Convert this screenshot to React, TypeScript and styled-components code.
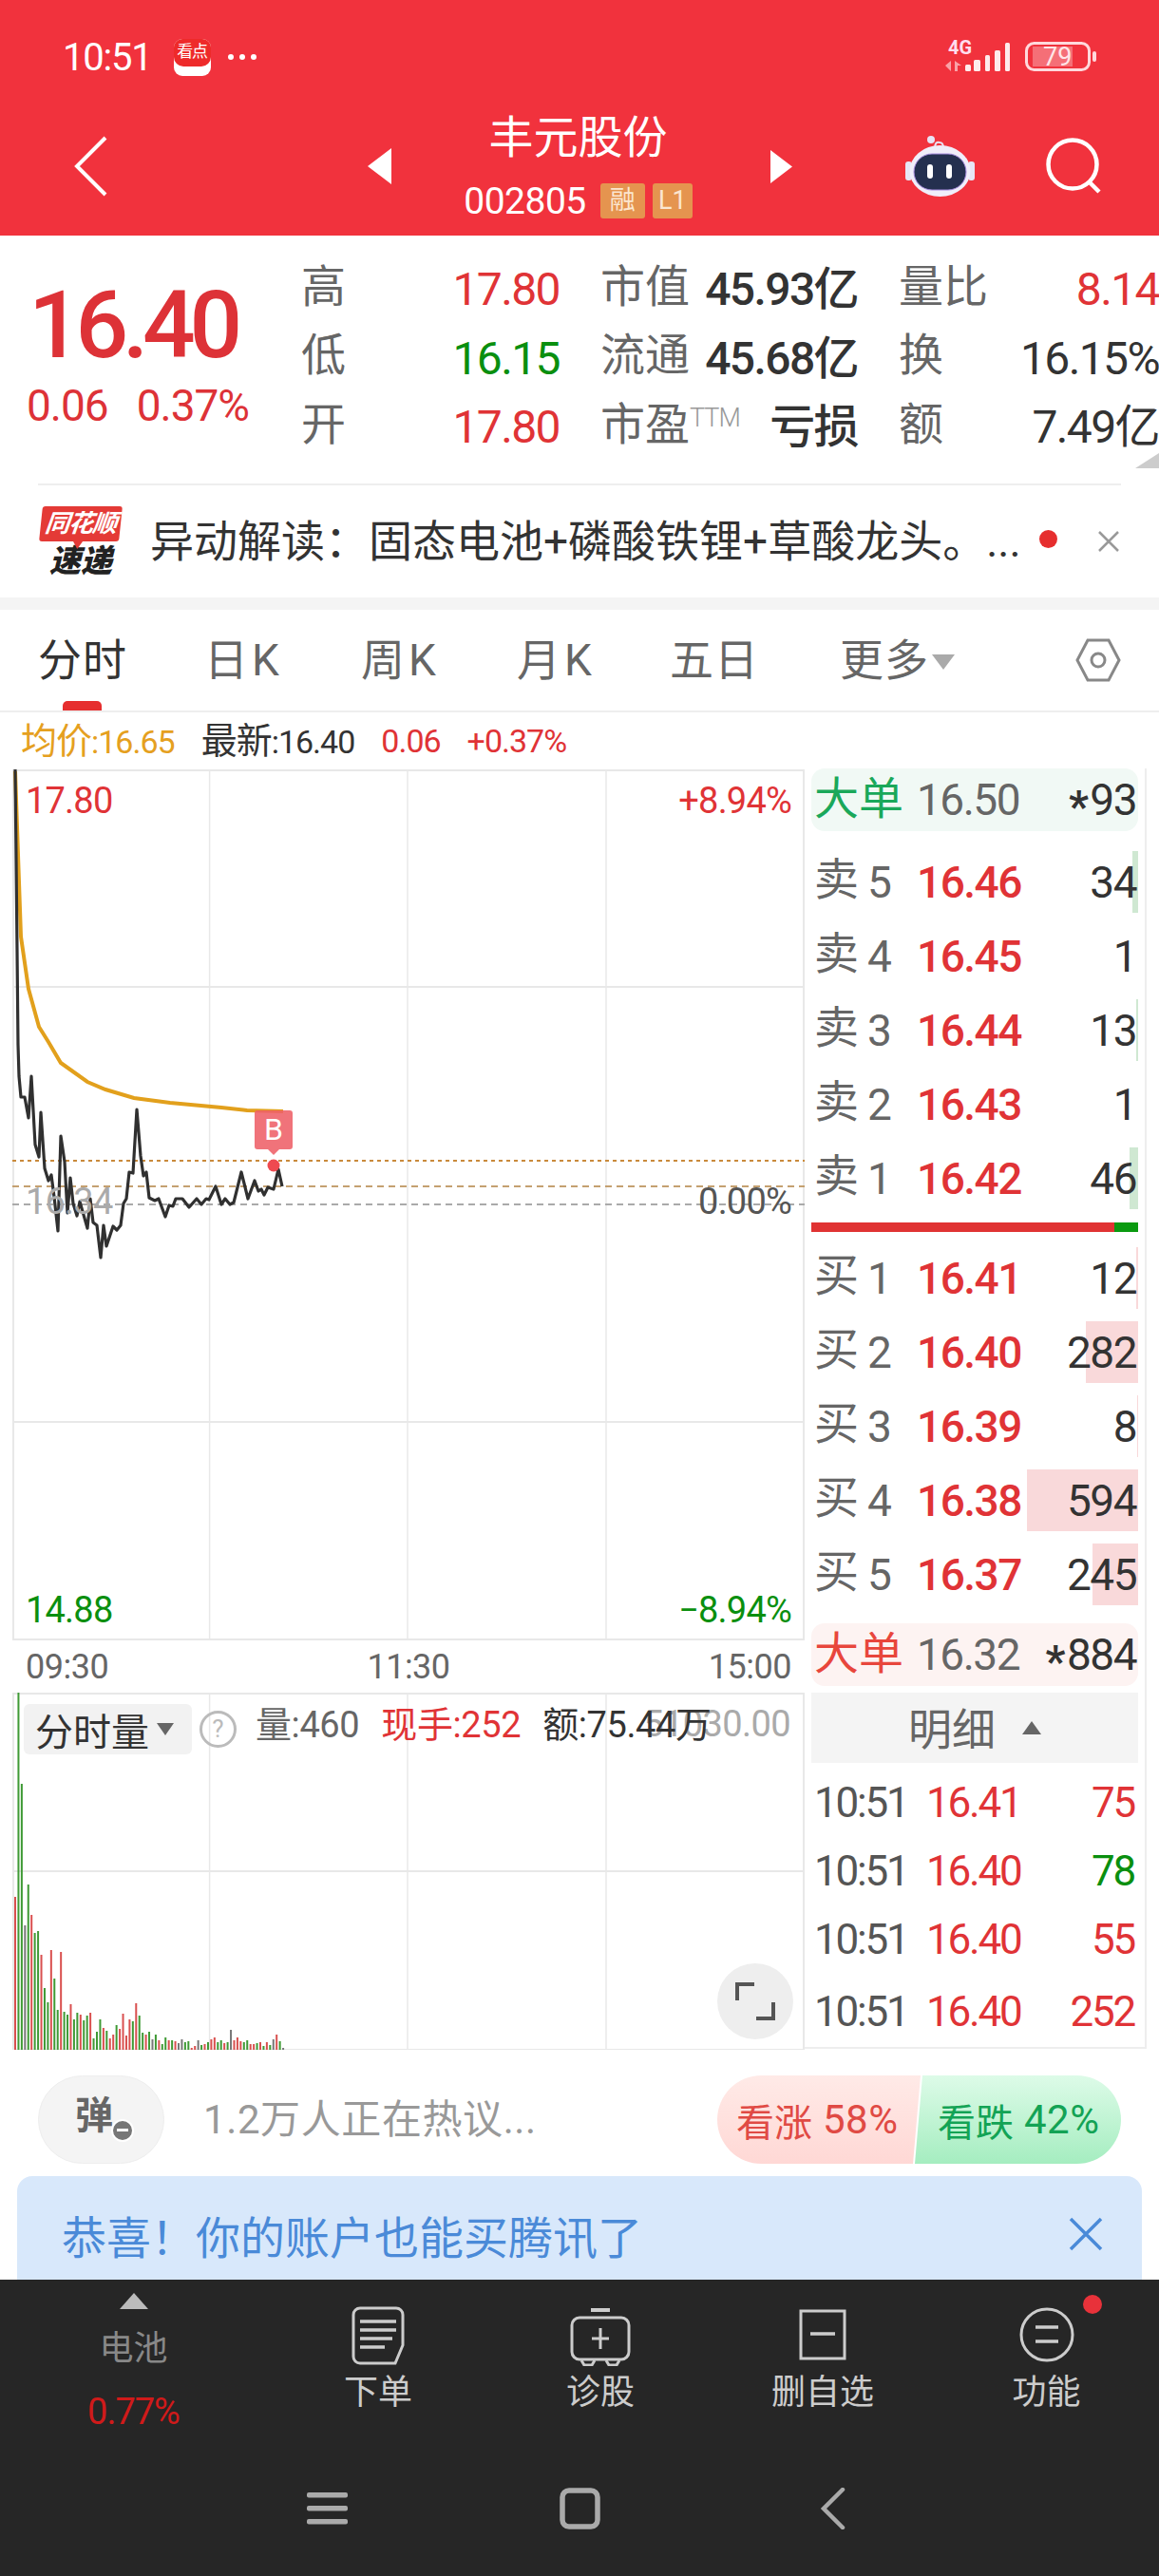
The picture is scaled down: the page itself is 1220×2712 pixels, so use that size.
import styled, { createGlobalStyle } from 'styled-components';

const FONT = `Roboto, 'Noto Sans CJK SC', sans-serif`;
const RED = '#e03336';
const GREEN = '#0a8f0f';

const GlobalStyle = createGlobalStyle`
  html, body { margin: 0; padding: 0; background: #fff; }
  * { box-sizing: border-box; }
`;

const Page = styled.div`
  width: 1220px;
  height: 2712px;
  overflow: hidden;
  display: flex;
  flex-direction: column;
  background: #fff;
  color: #333;
  font-family: ${FONT};
`;

/* ---------- red header ---------- */
const Header = styled.header`
  height: 248px;
  flex: none;
  background: #f1323d;
  color: #fff;
`;
const StatusRow = styled.div`
  height: 120px;
  display: flex;
  align-items: center;
  padding: 0 65px 0 66px;
`;
const Clock = styled.span`
  font-size: 40px;
  letter-spacing: -1.2px;
`;
const AppBadge = styled.span`
  width: 39px;
  height: 39px;
  margin-left: 23px;
  border-radius: 9px;
  overflow: hidden;
  background: #fff;
  display: block;
`;
const AppBadgeTop = styled.span`
  display: block;
  height: 29px;
  background: #ee2a2a;
  border-radius: 0 0 10px 10px;
  font-size: 17px;
  line-height: 27px;
  letter-spacing: -1px;
  text-align: center;
  color: #fff;
`;
const StatusDots = styled.span`
  display: flex;
  gap: 6px;
  margin-left: 18px;
  i {
    width: 6px;
    height: 6px;
    border-radius: 50%;
    background: #fff;
  }
`;
const StatusRight = styled.svg`
  margin-left: auto;
  display: block;
`;
const NavRow = styled.div`
  height: 128px;
  display: flex;
  align-items: center;
  padding: 0 0 18px 78px;
`;
const Titles = styled.div`
  width: 399px;
  padding-right: 6px;
  align-self: flex-start;
  display: flex;
  flex-direction: column;
  align-items: center;
`;
const Title = styled.div`
  margin-top: 2px;
  font-size: 47px;
  line-height: 46px;
`;
const CodeRow = styled.div`
  display: flex;
  align-items: center;
  height: 37px;
  margin-top: 25px;
  font-size: 39px;
  letter-spacing: -0.5px;
`;
const Tag = styled.span<{ $left: number }>`
  margin-left: ${(p) => p.$left}px;
  width: ${(p) => (p.$left > 10 ? 47 : 42)}px;
  height: 37px;
  border-radius: 3px;
  background: #e5944f;
  color: #fbe6d0;
  font-size: 27px;
  letter-spacing: 0;
  line-height: 36px;
  text-align: center;
`;
const NavIcon = styled.svg<{ $left?: number }>`
  display: block;
  flex: none;
  margin-left: ${(p) => p.$left ?? 0}px;
`;

/* ---------- quote block ---------- */
const Quote = styled.section`
  position: relative;
  height: 261px;
  flex: none;
  display: flex;
  padding-top: 21px;
`;
const PriceBox = styled.div`
  width: 317px;
  flex: none;
  padding-left: 30px;
`;
const BigPrice = styled.div`
  font-size: 98px;
  line-height: 96px;
  margin-top: 26px;
  font-weight: 500;
  letter-spacing: -6.2px;
  color: #dd3237;
`;
const PriceSub = styled.div`
  display: flex;
  gap: 30px;
  margin: 12px 0 0 -2px;
  font-size: 46px;
  line-height: 48px;
  letter-spacing: -1px;
  color: #dd3237;
`;
const StatGrid = styled.div`
  display: grid;
  grid-template-columns: 272px 271px 274px;
  column-gap: 43px;
  grid-auto-rows: 72.5px;
  flex: none;
`;
const Stat = styled.div`
  display: flex;
  align-items: center;
  justify-content: space-between;
  white-space: nowrap;
`;
const StatLabel = styled.span`
  margin-bottom: 7px;
  font-size: 47px;
  line-height: 60px;
  color: #666;
`;
const Ttm = styled.sup`
  font-size: 27px;
  font-weight: 300;
  color: #999;
  letter-spacing: -1px;
  vertical-align: 14px;
  line-height: 0;
`;
const StatValue = styled.span<{ $color?: string; $weight?: number }>`
  font-size: 48px;
  line-height: 60px;
  font-weight: ${(p) => p.$weight ?? 400};
  letter-spacing: -1.6px;
  color: ${(p) => p.$color ?? '#333'};
`;
const CornerMark = styled.i`
  position: absolute;
  right: 0;
  bottom: 16px;
  width: 25px;
  height: 16px;
  background: #ccc;
  clip-path: polygon(100% 0, 100% 100%, 0 100%);
`;

/* ---------- notice ---------- */
const Notice = styled.section`
  height: 120px;
  flex: none;
  margin: 0 40px;
  border-top: 2px solid #eee;
  display: flex;
  align-items: center;
  position: relative;
`;
const Brand = styled.div`
  width: 90px;
  flex: none;
  display: flex;
  flex-direction: column;
  align-items: center;
`;
const BrandBubble = styled.div`
  position: relative;
  width: 84px;
  height: 37px;
  background: #e43a36;
  border-radius: 3px;
  transform: skewX(-6deg);
  color: #fff;
  font-size: 26px;
  font-weight: 700;
  font-style: italic;
  line-height: 36px;
  letter-spacing: -1px;
  text-align: center;
  &::after {
    content: '';
    position: absolute;
    left: 36px;
    bottom: -8px;
    border: 5px solid transparent;
    border-top-color: #e43a36;
    border-bottom: 0;
    border-top-width: 8px;
  }
`;
const BrandText = styled.div`
  margin-top: 5px;
  font-size: 33px;
  line-height: 32px;
  font-weight: 900;
  font-style: italic;
  color: #222;
`;
const NoticeText = styled.div`
  margin: 0 0 8px 28px;
  font-size: 46px;
  white-space: nowrap;
  color: #333;
`;
const NoticeDot = styled.i`
  position: absolute;
  left: 1054px;
  top: 47px;
  width: 19px;
  height: 19px;
  border-radius: 50%;
  background: #e62e2e;
`;
const NoticeClose = styled.svg`
  position: absolute;
  right: 1px;
  top: 47px;
`;
const Band = styled.div`
  height: 13px;
  flex: none;
  background: #f4f4f4;
`;

/* ---------- tabs ---------- */
const Tabs = styled.nav`
  height: 108px;
  flex: none;
  display: flex;
  align-items: center;
  padding: 0 40px 0 40px;
  border-bottom: 2px solid #eee;
`;
const Tab = styled.span<{ $width: number; $active?: boolean; $wide?: boolean }>`
  position: relative;
  width: ${(p) => p.$width}px;
  flex: none;
  font-size: 46px;
  line-height: 104px;
  letter-spacing: ${(p) => (p.$wide ? 4 : 1)}px;
  color: ${(p) => (p.$active ? '#333' : '#666')};
  ${(p) =>
    p.$active &&
    `&::after {
      content: '';
      position: absolute;
      left: 26px;
      bottom: -1px;
      width: 41px;
      height: 10px;
      border-radius: 5px 5px 0 0;
      background: #e62e2e;
    }`}
`;
const TabArrow = styled.i`
  display: inline-block;
  margin: 0 0 4px 3px;
  border: 12px solid transparent;
  border-top: 16px solid #aaa;
  border-bottom: 0;
  vertical-align: middle;
`;
const Gear = styled.svg`
  margin-left: auto;
  display: block;
`;

/* ---------- chart row ---------- */
const InfoRow = styled.div`
  height: 60px;
  flex: none;
  display: flex;
  align-items: center;
  gap: 28px;
  padding-left: 22px;
  font-size: 34px;
  line-height: 50px;
  letter-spacing: -1px;
`;
const InfoItem = styled.span<{ $color: string }>`
  color: ${(p) => p.$color};
  white-space: nowrap;
  b {
    font-size: 38px;
    font-weight: 400;
  }
`;
const Market = styled.div`
  height: 1348px;
  flex: none;
  display: flex;
  padding-left: 13px;
`;
const ChartColumn = styled.div`
  width: 834px;
  flex: none;
  display: flex;
  flex-direction: column;
`;
const Plot = styled.div<{ $height: number }>`
  position: relative;
  height: ${(p) => p.$height}px;
  flex: none;
  svg {
    display: block;
  }
`;
const PlotLabel = styled.span<{ $color: string; $x: 'left' | 'right'; $top: number }>`
  position: absolute;
  ${(p) => (p.$x === 'left' ? 'left: 14px;' : 'right: 14px;')}
  top: ${(p) => p.$top}px;
  font-size: 38px;
  line-height: 44px;
  letter-spacing: -0.8px;
  color: ${(p) => p.$color};
`;
const BuyMark = styled.div`
  position: absolute;
  left: 255px;
  top: 359px;
  width: 40px;
  height: 41px;
  border-radius: 3px;
  background: rgba(238, 96, 104, 0.88);
  color: #fff;
  font-size: 32px;
  line-height: 41px;
  text-align: center;
  &::after {
    content: '';
    position: absolute;
    left: 14px;
    bottom: -6px;
    border: 6px solid transparent;
    border-top-color: rgba(238, 96, 104, 0.88);
    border-bottom: 0;
  }
`;
const TimeAxis = styled.div`
  height: 55px;
  flex: none;
  display: flex;
  align-items: center;
  justify-content: space-between;
  padding: 0 14px;
  font-size: 36px;
  letter-spacing: -0.5px;
  color: #666;
`;
const VolTag = styled.div`
  position: absolute;
  left: 12px;
  top: 12px;
  width: 177px;
  height: 53px;
  display: flex;
  align-items: center;
  padding-left: 12px;
  border-radius: 6px;
  background: #f2f2f2;
  font-size: 40px;
  color: #333;
`;
const VolArrow = styled.i`
  margin-left: 8px;
  border: 9px solid transparent;
  border-top: 13px solid #666;
  border-bottom: 0;
`;
const HelpMark = styled.span`
  position: absolute;
  left: 197px;
  top: 19px;
  width: 39px;
  height: 39px;
  border-radius: 50%;
  border: 3px solid #bbb;
  color: #bbb;
  font-size: 26px;
  line-height: 33px;
  text-align: center;
`;
const VolRead = styled.div`
  position: absolute;
  left: 256px;
  top: 12px;
  display: flex;
  gap: 23px;
  font-size: 38px;
  line-height: 44px;
  letter-spacing: -0.4px;
  white-space: nowrap;
`;
const VolReadItem = styled.span<{ $color: string }>`
  color: ${(p) => p.$color};
`;
const VolMax = styled.span`
  position: absolute;
  right: 15px;
  top: 11px;
  font-size: 38px;
  line-height: 44px;
  letter-spacing: -0.6px;
  color: #aaa;
`;
const ExpandButton = styled.div`
  position: absolute;
  left: 742px;
  top: 285px;
  width: 80px;
  height: 80px;
  border-radius: 50%;
  background: #eee;
  display: flex;
  align-items: center;
  justify-content: center;
`;

/* ---------- order book ---------- */
const BookColumn = styled.aside`
  width: 360px;
  flex: none;
  height: 1348px;
  margin-top: -1px;
  padding: 0 7px;
  border-right: 2px solid #eee;
  border-bottom: 2px solid #eee;
  display: flex;
  flex-direction: column;
  font-size: 46px;
`;
const BigOrder = styled.div<{ $bg: string; $top: number }>`
  height: 66px;
  flex: none;
  margin-top: ${(p) => p.$top}px;
  display: grid;
  grid-template-columns: 108px 1fr auto;
  align-items: center;
  line-height: 60px;
  padding: 0 2px 0 3px;
  border-radius: 14px;
  background: ${(p) => p.$bg};
`;
const BigLabel = styled.span<{ $color: string }>`
  margin-bottom: 2px;
  font-size: 47px;
  line-height: 60px;
  color: ${(p) => p.$color};
`;
const GrayPrice = styled.span`
  color: #666;
  letter-spacing: -1.5px;
`;
const Qty = styled.span`
  position: relative;
  color: #333;
  letter-spacing: -1.5px;
  text-align: right;
`;
const Star = styled.span`
  display: inline-block;
  margin-right: 3px;
  font-weight: 700;
  transform: translateY(7px);
`;
const Levels = styled.div<{ $top: number }>`
  flex: none;
  margin-top: ${(p) => p.$top}px;
  display: grid;
  grid-auto-rows: 65px;
  row-gap: 13px;
`;
const Level = styled.div`
  position: relative;
  display: grid;
  grid-template-columns: 108px 1fr auto;
  align-items: center;
  padding: 0 2px 0 3px;
`;
const LevelLabel = styled.span`
  color: #666;
  font-size: 46px;
  line-height: 60px;
  display: flex;
  align-items: baseline;
  gap: 9px;
`;
const LevelChar = styled.span`
  font-size: 47px;
  position: relative;
  top: -3px;
`;
const LevelPrice = styled.span`
  position: relative;
  color: ${RED};
  font-weight: 500;
  letter-spacing: -1.5px;
`;
const Depth = styled.i<{ $side: 'sell' | 'buy' }>`
  position: absolute;
  right: 0;
  top: 0;
  bottom: 0;
  background: ${(p) => (p.$side === 'sell' ? '#cfe8d2' : '#f9d9da')};
`;
const SplitBar = styled.div`
  height: 10px;
  flex: none;
  margin-top: 14px;
  display: flex;
  background: #0a9a10;
`;
const SplitRed = styled.i`
  display: block;
  height: 100%;
  background: #e03333;
`;
const DetailHead = styled.div`
  height: 74px;
  flex: none;
  margin-top: 7px;
  display: flex;
  align-items: center;
  justify-content: center;
  gap: 28px;
  background: #f4f4f4;
  color: #666;
  span {
    margin-bottom: 4px;
  }
`;
const DetailArrow = styled.i`
  border: 10px solid transparent;
  border-bottom: 14px solid #666;
  border-top: 0;
`;
const Ticks = styled.div`
  margin-top: 6px;
  display: flex;
  flex-direction: column;
`;
const Tick = styled.div`
  height: 72px;
  display: grid;
  grid-template-columns: 118px 1fr auto;
  align-items: center;
  padding: 0 4px 0 3px;
  font-size: 44px;
  letter-spacing: -2.2px;
  &:last-child {
    margin-top: 4px;
  }
`;
const TickCell = styled.span<{ $color: string }>`
  color: ${(p) => p.$color};
`;

/* ---------- community row ---------- */
const Community = styled.section`
  height: 133px;
  flex: none;
  display: flex;
  align-items: flex-start;
  padding: 27px 40px 0;
`;
const DanmuButton = styled.div`
  position: relative;
  width: 133px;
  height: 93px;
  flex: none;
  border-radius: 47px;
  background: #f4f4f4;
  border: 1px solid #eee;
  padding-left: 38px;
  font-size: 40px;
  font-weight: 700;
  line-height: 84px;
  color: #666;
`;
const DanmuBadge = styled.i`
  position: absolute;
  left: 76px;
  top: 45px;
  width: 24px;
  height: 24px;
  border-radius: 50%;
  background: #777;
  border: 2px solid #fff;
  &::after {
    content: '';
    position: absolute;
    left: 4px;
    top: 8px;
    width: 12px;
    height: 3px;
    background: #fff;
  }
`;
const HotText = styled.div`
  margin-left: 41px;
  font-size: 42px;
  line-height: 93px;
  letter-spacing: 0.6px;
  color: #999;
`;
const Vote = styled.div`
  margin-left: auto;
  width: 425px;
  height: 93px;
  display: flex;
`;
const VoteSide = styled.div<{ $up?: boolean }>`
  height: 93px;
  display: flex;
  align-items: center;
  gap: 11px;
  font-size: 40px;
  white-space: nowrap;
  span {
    font-size: 42px;
    letter-spacing: 0.5px;
  }
  ${(p) =>
    p.$up
      ? `width: 214px;
         padding-left: 20px;
         border-radius: 47px 0 0 47px;
         background: linear-gradient(#ffeae7, #ffd8d5);
         clip-path: polygon(0 0, 100% 0, calc(100% - 8px) 100%, 0 100%);
         color: #e04a44;`
      : `width: 217px;
         margin-left: -6px;
         padding-left: 24px;
         border-radius: 0 47px 47px 0;
         background: linear-gradient(#ddfbe8, #a5edc0);
         clip-path: polygon(8px 0, 100% 0, 100% 100%, 0 100%);
         color: #13a355;`}
`;
const Banner = styled.section`
  height: 109px;
  flex: none;
  margin: 0 18px;
  padding: 13px 41px 0 47px;
  border-radius: 16px 16px 0 0;
  background: #d8e8fb;
  display: flex;
  align-items: center;
  justify-content: space-between;
  color: #4a8ad8;
  font-size: 47px;
  white-space: nowrap;
`;

/* ---------- dark footer ---------- */
const Footer = styled.footer`
  flex: 1;
  background: #262626;
`;
const Toolbar = styled.div`
  height: 200px;
  display: grid;
  grid-template-columns: 281px 234px 234px 234px 237px;
  padding-top: 14px;
`;
const ToolItem = styled.div`
  position: relative;
  display: flex;
  flex-direction: column;
  align-items: center;
  padding-top: 13px;
  font-size: 36px;
  color: #ccc;
  svg {
    display: block;
    height: 64px;
  }
`;
const ToolLabel = styled.span`
  margin-top: 6px;
  line-height: 44px;
`;
const WatchCell = styled.div`
  display: flex;
  flex-direction: column;
  align-items: center;
`;
const WatchArrow = styled.i`
  border: 15px solid transparent;
  border-bottom: 17px solid #bbb;
  border-top: 0;
`;
const WatchName = styled.span`
  margin-top: 20px;
  font-size: 36px;
  line-height: 44px;
  color: #888;
`;
const WatchRate = styled.span`
  margin-top: 22px;
  font-size: 38px;
  line-height: 44px;
  letter-spacing: -1px;
  color: #d01a1a;
`;
const RedDot = styled.i`
  position: absolute;
  left: 157px;
  top: 2px;
  width: 20px;
  height: 20px;
  border-radius: 50%;
  background: #e8323a;
`;
const SystemNav = styled.div`
  display: grid;
  grid-template-columns: repeat(3, 266px);
  justify-items: center;
  padding: 19px 0 0 212px;
  svg {
    display: block;
  }
`;

/* ---------- data ---------- */
const STATS = [
  { label: <>高</>, value: '17.80', color: RED },
  { label: <>市值</>, value: '45.93亿', weight: 500 },
  { label: <>量比</>, value: '8.14', color: RED },
  { label: <>低</>, value: '16.15', color: GREEN },
  { label: <>流通</>, value: '45.68亿', weight: 500 },
  { label: <>换</>, value: '16.15%', weight: 400 },
  { label: <>开</>, value: '17.80', color: RED },
  { label: <>市盈<Ttm>TTM</Ttm></>, value: '亏损', weight: 500 },
  { label: <>额</>, value: '7.49亿', weight: 400 },
];

const SELLS = [
  { n: 5, price: '16.46', qty: '34', depth: 6 },
  { n: 4, price: '16.45', qty: '1', depth: 0 },
  { n: 3, price: '16.44', qty: '13', depth: 2 },
  { n: 2, price: '16.43', qty: '1', depth: 0 },
  { n: 1, price: '16.42', qty: '46', depth: 9 },
];
const BUYS = [
  { n: 1, price: '16.41', qty: '12', depth: 2 },
  { n: 2, price: '16.40', qty: '282', depth: 55 },
  { n: 3, price: '16.39', qty: '8', depth: 1 },
  { n: 4, price: '16.38', qty: '594', depth: 117 },
  { n: 5, price: '16.37', qty: '245', depth: 48 },
];
const TICKS = [
  { price: '16.41', qty: '75', color: RED },
  { price: '16.40', qty: '78', color: GREEN },
  { price: '16.40', qty: '55', color: RED },
  { price: '16.40', qty: '252', color: RED },
];

const PRICE_LINE =
  '16,810 18,1000 19,1100 20,1133 22,1155 26,1155 30,1177 33,1133 37,1205 41,1218 43,1171 47,1230 51,1243 54,1237 57,1260 61,1296 64,1196 68,1223 71,1277 74,1240 77,1267 81,1280 84,1265 92,1293 95,1262 98,1287 102,1290 106,1324 109,1290 112,1312 119,1291 123,1295 127,1290 130,1267 133,1262 136,1234 140,1235 144,1168 148,1217 151,1238 154,1234 157,1261 163,1264 167,1262 174,1281 178,1269 182,1270 185,1262 192,1262 199,1271 207,1262 212,1268 217,1262 220,1263 227,1249 233,1268 237,1262 242,1268 246,1266 254,1234 261,1262 268,1243 272,1254 275,1252 278,1258 282,1250 288,1252 293,1231 297,1249';
const AVG_LINE =
  '16,812 19,900 22,986 30,1041 41,1081 51,1097 64,1119 92,1139 111,1147 141,1156 179,1161 233,1166 260,1169 298,1170';

const VOLUME =
  '162r 377g 281g 132n 175g 143r 124g 126g 101r 66g 51g 106r 76g 43g 104r 41g 38g 49r 33g 40g 38r 32g 37g 40r 13g 20g 33g 24r 21g 13r 17r 27g 23r 39r 16r 33r 31g 50r 37g 19g 17r 20g 12n 17g 11r 7g 14g 11r 11g 10r 8n 12n 9g 10g 3r 5r 11n 6g 7r 9g 12r 14r 9g 11g 8r 9g 22n 11r 14r 10r 9g 11g 7r 7r 8g 9r 5g 9r 6g 12n 17r 10g 3n'
    .split(' ')
    .map((item) => ({ height: parseInt(item, 10), kind: item.slice(-1) }));
const BAR_COLORS: Record<string, string> = { r: '#d9504f', g: '#3f9a35', n: '#777' };

const Grid = ({ top, height, rows }: { top: number; height: number; rows: number[] }) => (
  <g stroke="#e8e8e8" strokeWidth="2">
    <line x1="14" y1={top} x2="14" y2={top + height} />
    {[220.6, 429, 638].map((x) => (
      <line key={x} x1={x} y1={top} x2={x} y2={top + height} strokeWidth="1.5" />
    ))}
    <line x1="846" y1={top} x2="846" y2={top + height} />
    {rows.map((y) => (
      <line key={y} x1="13" y1={y} x2="847" y2={y} />
    ))}
  </g>
);

const App = () => (
  <Page>
    <GlobalStyle />
    <Header>
      <StatusRow>
        <Clock>10:51</Clock>
        <AppBadge>
          <AppBadgeTop>看点</AppBadgeTop>
        </AppBadge>
        <StatusDots>
          <i />
          <i />
          <i />
        </StatusDots>
        <StatusRight width="160" height="36" viewBox="0 0 160 36" fill="#fff">
          <text x="3" y="15" fontSize="20" fontWeight="700" fontFamily="Roboto" fill="#fde">4G</text>
          <path d="M0 27l6-5v11zM10 22l7 5h-4v6h-3z" opacity=".55" />
          <rect x="21" y="26" width="6" height="7" rx="1.500" opacity=".9" />
          <rect x="30" y="21" width="7" height="12" rx="1.500" opacity=".9" />
          <rect x="42" y="16" width="5" height="17" rx="1.500" opacity=".9" />
          <rect x="52" y="11" width="6" height="22" rx="1.500" opacity=".9" />
          <rect x="63" y="3" width="5" height="30" rx="1.500" opacity=".9" />
          <rect x="92" y="7" width="42" height="21" fill="#fff" opacity=".3" />
          <rect x="85.500" y="3.500" width="66" height="28" rx="8" fill="none" stroke="#ffd9dc" strokeWidth="3" />
          <rect x="155" y="12" width="4" height="11" rx="2" fill="#ffd9dc" />
          <text x="103" y="27" fontSize="27" fontFamily="Roboto" fill="#ffe6e8">79</text>
        </StatusRight>
      </StatusRow>
      <NavRow>
        <NavIcon width="35" height="64" viewBox="0 0 35 64" fill="none">
          <path d="M33 2L3 32l30 30" stroke="#fff" strokeWidth="4" />
        </NavIcon>
        <NavIcon $left={274} width="25" height="38" viewBox="0 0 25 38">
          <path d="M25 0v38L0 19z" fill="#fff" />
        </NavIcon>
        <Titles>
          <Title>丰元股份</Title>
          <CodeRow>
            002805
            <Tag $left={15}>融</Tag>
            <Tag $left={8}>L1</Tag>
          </CodeRow>
        </Titles>
        <NavIcon width="23" height="35" viewBox="0 0 23 35">
          <path d="M0 0v35l23-17.500z" fill="#fff" />
        </NavIcon>
        <NavIcon $left={119} width="73" height="66" viewBox="0 0 73 66">
          <path d="M31 14c0-5 2-7 5-6 3 0 4 2 4 6" fill="none" stroke="#e8e3f5" strokeWidth="2" />
          <circle cx="27" cy="5" r="4" fill="#e8e3f5" />
          <rect x="0" y="28" width="7" height="20" rx="3" fill="#e6e6f6" />
          <rect x="66" y="28" width="7" height="20" rx="3" fill="#e6e6f6" />
          <ellipse cx="36.500" cy="38" rx="32" ry="27" fill="#f0eefa" />
          <rect x="9" y="20" width="55" height="38" rx="19" fill="#24304f" stroke="#a88de0" strokeWidth="1" />
          <rect x="23" y="31" width="6" height="15" rx="3" fill="#fff" />
          <rect x="43" y="31" width="6" height="15" rx="3" fill="#fff" />
        </NavIcon>
        <NavIcon $left={75} width="60" height="60" viewBox="0 0 60 60" fill="none" stroke="#fff" strokeWidth="4.500">
          <circle cx="28" cy="28" r="25.500" />
          <path d="M45 46l11 11" />
        </NavIcon>
      </NavRow>
    </Header>

    <Quote>
      <PriceBox>
        <BigPrice>16.40</BigPrice>
        <PriceSub>
          <span>0.06</span>
          <span>0.37%</span>
        </PriceSub>
      </PriceBox>
      <StatGrid>
        {STATS.map((stat, i) => (
          <Stat key={i}>
            <StatLabel>{stat.label}</StatLabel>
            <StatValue $color={stat.color} $weight={stat.weight}>
              {stat.value}
            </StatValue>
          </Stat>
        ))}
      </StatGrid>
      <CornerMark />
    </Quote>

    <Notice>
      <Brand>
        <BrandBubble>同花顺</BrandBubble>
        <BrandText>速递</BrandText>
      </Brand>
      <NoticeText>异动解读：固态电池+磷酸铁锂+草酸龙头。...</NoticeText>
      <NoticeDot />
      <NoticeClose width="24" height="24" viewBox="0 0 24 24" stroke="#999" strokeWidth="2.500">
        <path d="M2 2l20 20M22 2L2 22" />
      </NoticeClose>
    </Notice>
    <Band />

    <Tabs>
      <Tab $width={175} $active>分时</Tab>
      <Tab $width={165} $wide>日K</Tab>
      <Tab $width={164} $wide>周K</Tab>
      <Tab $width={161} $wide>月K</Tab>
      <Tab $width={179}>五日</Tab>
      <Tab $width={130}>
        更多
        <TabArrow />
      </Tab>
      <Gear width="48" height="46" viewBox="0 0 48 46" fill="none" stroke="#888" strokeWidth="3">
        <path d="M13 2h22l11 21-11 21H13L2 23z" />
        <circle cx="24" cy="23" r="7" />
      </Gear>
    </Tabs>

    <InfoRow>
      <InfoItem $color="#e5a01f"><b>均价</b>:16.65</InfoItem>
      <InfoItem $color="#333"><b>最新</b>:16.40</InfoItem>
      <InfoItem $color={RED}>0.06</InfoItem>
      <InfoItem $color={RED}>+0.37%</InfoItem>
    </InfoRow>

    <Market>
      <ChartColumn>
        <Plot $height={917}>
          <svg width="834" height="917" viewBox="13 810 834 917" fill="none">
            <Grid top={810} height={917} rows={[811, 1039, 1497, 1726]} />
            <line x1="13" y1="1222" x2="847" y2="1222" stroke="#c98a3c" strokeWidth="2" strokeDasharray="4 4" />
            <line x1="13" y1="1249" x2="847" y2="1249" stroke="#c4a070" strokeWidth="2" strokeDasharray="7 5" />
            <line x1="13" y1="1268" x2="847" y2="1268" stroke="#aaa" strokeWidth="2" strokeDasharray="7 5" />
            <polyline points={AVG_LINE} stroke="#e2a01c" strokeWidth="4" />
            <polyline points={PRICE_LINE} stroke="#303030" strokeWidth="3.200" strokeLinejoin="round" />
            <circle cx="288" cy="1227" r="6.500" fill="#ef4a50" />
          </svg>
          <PlotLabel $x="left" $color={RED} $top={11}>17.80</PlotLabel>
          <PlotLabel $x="right" $color={RED} $top={11}>+8.94%</PlotLabel>
          <PlotLabel $x="left" $color="#aaa" $top={433}>16.34</PlotLabel>
          <PlotLabel $x="right" $color="#555" $top={433}>0.00%</PlotLabel>
          <PlotLabel $x="left" $color={GREEN} $top={863}>14.88</PlotLabel>
          <PlotLabel $x="right" $color={GREEN} $top={863}>−8.94%</PlotLabel>
          <BuyMark>B</BuyMark>
        </Plot>
        <TimeAxis>
          <span>09:30</span>
          <span>11:30</span>
          <span>15:00</span>
        </TimeAxis>
        <Plot $height={376}>
          <svg width="834" height="376" viewBox="13 1782 834 376" fill="none">
            <Grid top={1782} height={376} rows={[1783, 1970, 2158]} />
            {VOLUME.map((bar, i) => (
              <rect
                key={i}
                x={15 + i * 3.44}
                y={2159 - bar.height}
                width="2"
                height={bar.height}
                fill={BAR_COLORS[bar.kind]}
              />
            ))}
          </svg>
          <VolMax>51030.00</VolMax>
          <VolTag>
            分时量
            <VolArrow />
          </VolTag>
          <HelpMark>?</HelpMark>
          <VolRead>
            <VolReadItem $color="#666">量:460</VolReadItem>
            <VolReadItem $color={RED}>现手:252</VolReadItem>
            <VolReadItem $color="#333">额:75.44万</VolReadItem>
          </VolRead>
          <ExpandButton>
            <svg width="42" height="42" viewBox="0 0 42 42" fill="none" stroke="#555" strokeWidth="4">
              <path d="M2 20V3h18M40 22v17H22" />
            </svg>
          </ExpandButton>
        </Plot>
      </ChartColumn>

      <BookColumn>
        <BigOrder $bg="#f1f9f5" $top={0}>
          <BigLabel $color="#1aa85a">大单</BigLabel>
          <GrayPrice>16.50</GrayPrice>
          <Qty>
            <Star>*</Star>93
          </Qty>
        </BigOrder>
        <Levels $top={21}>
          {SELLS.map((row) => (
            <Level key={row.n}>
              {row.depth > 0 && <Depth $side="sell" style={{ width: row.depth }} />}
              <LevelLabel>
                <LevelChar>卖</LevelChar>
                <span>{row.n}</span>
              </LevelLabel>
              <LevelPrice>{row.price}</LevelPrice>
              <Qty>{row.qty}</Qty>
            </Level>
          ))}
        </Levels>
        <SplitBar>
          <SplitRed style={{ width: 319 }} />
        </SplitBar>
        <Levels $top={16}>
          {BUYS.map((row) => (
            <Level key={row.n}>
              <Depth $side="buy" style={{ width: row.depth }} />
              <LevelLabel>
                <LevelChar>买</LevelChar>
                <span>{row.n}</span>
              </LevelLabel>
              <LevelPrice>{row.price}</LevelPrice>
              <Qty>{row.qty}</Qty>
            </Level>
          ))}
        </Levels>
        <BigOrder $bg="#fdf3f2" $top={19}>
          <BigLabel $color="#e8463c">大单</BigLabel>
          <GrayPrice>16.32</GrayPrice>
          <Qty>
            <Star>*</Star>884
          </Qty>
        </BigOrder>
        <DetailHead>
          <span>明细</span>
          <DetailArrow />
        </DetailHead>
        <Ticks>
          {TICKS.map((tick, i) => (
            <Tick key={i}>
              <TickCell $color="#555">10:51</TickCell>
              <TickCell $color={RED}>{tick.price}</TickCell>
              <TickCell $color={tick.color}>{tick.qty}</TickCell>
            </Tick>
          ))}
        </Ticks>
      </BookColumn>
    </Market>

    <Community>
      <DanmuButton>
        弹
        <DanmuBadge />
      </DanmuButton>
      <HotText>1.2万人正在热议...</HotText>
      <Vote>
        <VoteSide $up>
          看涨
          <span>58%</span>
        </VoteSide>
        <VoteSide>
          看跌
          <span>42%</span>
        </VoteSide>
      </Vote>
    </Community>

    <Banner>
      恭喜！你的账户也能买腾讯了
      <svg width="36" height="36" viewBox="0 0 36 36" stroke="#4a8ad8" strokeWidth="3.500">
        <path d="M2 2l32 32M34 2L2 34" />
      </svg>
    </Banner>

    <Footer>
      <Toolbar>
        <WatchCell>
          <WatchArrow />
          <WatchName>电池</WatchName>
          <WatchRate>0.77%</WatchRate>
        </WatchCell>
        <ToolItem>
          <svg width="56" viewBox="0 0 56 64" fill="none" stroke="#ccc" strokeWidth="3">
            <path d="M9 3h38a7 7 0 0 1 7 7v32l-8 19H9a7 7 0 0 1-7-7V10a7 7 0 0 1 7-7z" />
            <path d="M9 17h38M9 26h38M9 35h34M9 44h26" strokeWidth="3.500" />
          </svg>
          <ToolLabel>下单</ToolLabel>
        </ToolItem>
        <ToolItem>
          <svg width="64" viewBox="0 0 64 64" fill="none" stroke="#ccc" strokeWidth="3">
            <path d="M22 5h20" strokeWidth="4" />
            <rect x="2" y="13" width="60" height="44" rx="8" />
            <path d="M32 24v22M23 35h18M12 58l3 5h8l3-5M38 58l3 5h8l3-5" />
          </svg>
          <ToolLabel>诊股</ToolLabel>
        </ToolItem>
        <ToolItem>
          <svg width="50" viewBox="0 0 50 64" fill="none" stroke="#ccc" strokeWidth="3">
            <rect x="2" y="6" width="46" height="50" />
            <path d="M12 30h26" strokeWidth="3.500" />
          </svg>
          <ToolLabel>删自选</ToolLabel>
        </ToolItem>
        <ToolItem>
          <svg width="58" viewBox="0 0 58 64" fill="none" stroke="#ccc" strokeWidth="3">
            <circle cx="29" cy="31" r="27" />
            <path d="M17 23h24M17 38h24" strokeWidth="3.500" />
          </svg>
          <ToolLabel>功能</ToolLabel>
          <RedDot />
        </ToolItem>
      </Toolbar>
      <SystemNav>
        <svg width="44" height="44" viewBox="0 0 44 44" fill="#aaa">
          <rect x="0" y="5" width="43" height="5.500" rx="2" />
          <rect x="0" y="19" width="43" height="5.500" rx="2" />
          <rect x="0" y="33" width="43" height="5.500" rx="2" />
        </svg>
        <svg width="44" height="44" viewBox="0 0 44 44" fill="none" stroke="#aaa" strokeWidth="5.500">
          <rect x="3" y="3" width="37" height="38" rx="7" />
        </svg>
        <svg width="28" height="44" viewBox="0 0 28 44" fill="none" stroke="#aaa" strokeWidth="4.500" strokeLinecap="round">
          <path d="M24 2L4 22l20 20" />
        </svg>
      </SystemNav>
    </Footer>
  </Page>
);

export default App;
